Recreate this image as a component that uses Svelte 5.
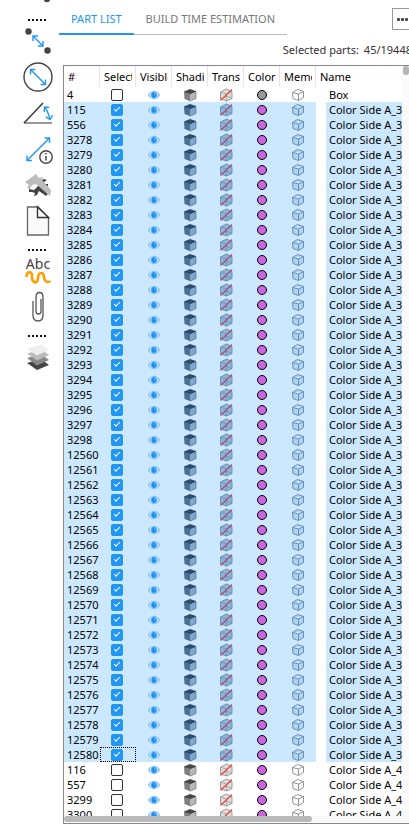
<script lang="ts">
	type Part = { id: number; name: string; selected: boolean; color: string };

	const range = (from: number, to: number) =>
		Array.from({ length: to - from + 1 }, (_, i) => from + i);

	const makePart = (id: number, name: string, selected: boolean): Part => ({
		id,
		name,
		selected,
		color: id === 4 ? 'grey' : 'violet'
	});

	let parts: Part[] = $state([
		makePart(4, 'Box', false),
		...[115, 556, ...range(3278, 3298), ...range(12560, 12580)].map((id) =>
			makePart(id, 'Color Side A_3', true)
		),
		...[116, 557, 3299, 3300].map((id) => makePart(id, 'Color Side A_4', false))
	]);

	let current = $state(12580);

	const columns = ['#', 'Selected', 'Visible', 'Shading', 'Transparent', 'Color', 'Memo', 'Name'];
</script>

<svg class="defs" aria-hidden="true">
	<defs>
		<marker id="arrow" viewBox="0 0 8 8" refX="6.5" refY="4" markerWidth="8" markerHeight="8" markerUnits="userSpaceOnUse" orient="auto-start-reverse">
			<path d="M3 0.5 L6.5 4 L3 7.5" fill="none" stroke="#2196f3" stroke-width="1.4" />
		</marker>
		<symbol id="eye" viewBox="0 0 14 12">
			<path d="M1 6 C3 0.5 11 0.5 13 6 C11 11.500 3 11.500 1 6Z" fill="#7cc0f8" />
			<path d="M2.5 6 C3 4 4 3.500 5 3 V9 C4 8.500 3 8 2.5 6Z M11.5 6 C11 4 10 3.500 9 3 V9 C10 8.500 11 8 11.5 6Z" fill="#c7e4fb" />
			<circle cx="7" cy="6" r="2.8" fill="#1e8fee" />
			<circle cx="8" cy="5" r="0.8" fill="#8cc8f8" />
		</symbol>
		<symbol id="shaded" viewBox="0 0 14 14">
			<path d="M1 3.500 L7 1 L13 3 V4 L7.500 6.500 L1 4.500Z" fill="var(--cube-top)" />
			<path d="M1 4 L7.500 6 V13 L1.500 10.500Z" fill="var(--cube-left)" />
			<path d="M7.500 6 L13 4 V10.500 L7.500 13Z" fill="var(--cube-right)" />
			<path d="M1.500 10.500 L7.500 13 L13 10.500 V4" fill="none" stroke="var(--cube-top)" stroke-width="0.5" />
		</symbol>
		<symbol id="transparent" viewBox="0 0 14 14">
			<path d="M1.5 4 L7.5 1 L13 3.5 V10.500 L7.5 13 L1.5 11Z" fill="var(--glass)" stroke="var(--line)" stroke-width="0.8" />
			<path d="M1.5 4 L7 6 L13 3.5 M7 6 L7.5 13 M7.5 8 L1.5 11 M7.5 8 L13 10.500" fill="none" stroke="var(--line)" stroke-width="0.6" />
			<path d="M1.5 12.5 L13 1.500" stroke="var(--slash)" stroke-width="1.1" />
		</symbol>
		<symbol id="outline" viewBox="0 0 14 14">
			<path d="M1.5 4.5 L6.5 1.5 L12.5 3.5 V9.5 L7.5 12.5 L2 10.5Z M1.5 4.5 L7.5 6 L12.5 3.5 M7.5 6 V12.5" fill="var(--clear)" stroke="var(--line)" stroke-linejoin="round" stroke-width="0.9" />
		</symbol>
	</defs>
</svg>

<div class="app">
	<nav class="tools" aria-label="Tools">
		<svg class="tool-end" viewBox="0 0 32 10"><circle cx="25" cy="-1" r="3.2" fill="#444" /></svg>
		<div class="dots"><i></i><i></i><i></i><i></i><i></i></div>
		<button aria-label="Point distance">
			<svg viewBox="0 0 32 36">
				<circle cx="6.5" cy="7.5" r="3.2" fill="#444" />
				<circle cx="25.5" cy="26.5" r="3.2" fill="#444" />
				<path class="measure" d="M11 12 L21 22" />
			</svg>
		</button>
		<button aria-label="Diameter">
			<svg viewBox="0 0 32 36">
				<circle cx="16" cy="17" r="14" fill="none" stroke="#444" stroke-width="1.4" />
				<path class="measure" d="M8.500 9.500 L23.5 24.5" />
			</svg>
		</button>
		<button aria-label="Angle">
			<svg viewBox="0 0 32 36">
				<path d="M2 27 H30" stroke="#999" stroke-width="2" />
				<path d="M2 27 L21 7" stroke="#444" stroke-width="1.7" />
				<path class="measure" d="M22.500 11 Q26 15 28 23.500" />
			</svg>
		</button>
		<button aria-label="Line information">
			<svg viewBox="0 0 32 36">
				<path class="measure" d="M5 28.5 L27.5 6" />
				<circle cx="24" cy="25" r="6.2" fill="#fff" stroke="#444" stroke-width="1.4" />
				<path d="M24 24 V28.5 M24 21 V22.6" stroke="#444" stroke-width="1.5" />
			</svg>
		</button>
		<button aria-label="Repair">
			<svg viewBox="0 0 32 36">
				<path d="M7 21 L12 22 L18 16 L18 13 L22 11 L25 12 L22 14 L23 16 L26 16 L26 18 L20 20 L26 26 L24 28 L17 23 L15 27 L12 28 L13 25 L10 24 L7 24Z" fill="#444" />
				<path d="M3 14 L14 6 L17 10 L21 9 L20 12 L29 22 L28 28 L14 16 L10 17 L8 21 L5 20 L7 17Z" fill="#bdbdbd" />
			</svg>
		</button>
		<button aria-label="Document">
			<svg viewBox="0 0 32 36">
				<path d="M5.5 3 H16 L26.5 13.500 V31 H5.5Z" fill="#fafafa" stroke="#666" stroke-width="1.3" />
				<path d="M15.5 3 V13.5 H26.5Z" fill="#fff" stroke="#333" stroke-width="1.4" />
			</svg>
		</button>
		<div class="dots"><i></i><i></i><i></i><i></i><i></i></div>
		<button aria-label="Text">
			<svg viewBox="0 0 32 36">
				<text x="16" y="15" text-anchor="middle">Abc</text>
				<path d="M4.500 22 C5 17 10.500 17 10 22 C9.500 29 15.500 31 16 24 C16.500 17 21.500 18 22 23 C22 27 25 29 27.500 27.500" fill="none" stroke="#ff9f00" stroke-width="2.6" stroke-linecap="round" />
			</svg>
		</button>
		<button aria-label="Attachment">
			<svg viewBox="0 0 32 36">
				<path d="M19 9 V21 Q19 24 16.500 24 Q14 24 14 21 V7 Q14 2.500 17.500 2.500 Q21 2.500 21 7 V25 Q21 31 16 31 Q11 31 11 25 V11" fill="none" stroke="#555" stroke-width="1.3" />
			</svg>
		</button>
		<div class="dots"><i></i><i></i><i></i><i></i><i></i></div>
		<button aria-label="Layers">
			<svg viewBox="0 0 32 36">
				<path d="M5 23 L19 19 L27 25 L15 30Z" fill="#444" />
				<path d="M5 18 L19 14 L27 20 L15 25.500Z" fill="#888" />
				<path d="M5 13.500 L19 9.500 L27 15 L15 20.500Z" fill="#bbb" />
				<path d="M5 9 L19 4.500 L27 10 L15 15.500Z" fill="#eee" />
			</svg>
		</button>
	</nav>

	<main>
		<header>
			<div class="tabs" role="tablist">
				<button class="active" role="tab" aria-selected="true">PART LIST</button>
				<button role="tab" aria-selected="false">BUILD TIME ESTIMATION</button>
			</div>
			<button class="more" aria-label="More">
				<i></i><i></i><i></i><i></i>
			</button>
		</header>

		<p class="summary"><span>Selected parts:</span><span>45/19448</span></p>

		<div class="list">
			<div class="viewport">
				<table>
					<colgroup>
						{#each columns as column}
							<col class:name={column === 'Name'} />
						{/each}
					</colgroup>
					<thead>
						<tr>
							{#each columns as column}
								<th><span>{column}</span></th>
							{/each}
						</tr>
					</thead>
					<tbody>
						{#each parts as part (part.id)}
							<tr class:selected={part.selected}>
								<td class="id">{part.id}</td>
								<td class="icon check" class:current={part.id === current}>
									<input
										type="checkbox"
										aria-label="Select {part.id}"
										bind:checked={part.selected}
										onchange={() => (current = part.id)}
									/>
								</td>
								<td class="icon"><svg class="eye"><use href="#eye" /></svg></td>
								<td class="icon"><svg><use href="#shaded" /></svg></td>
								<td class="icon"><svg><use href="#transparent" /></svg></td>
								<td class="icon"><span class="swatch {part.color}"></span></td>
								<td class="icon"><svg><use href="#outline" /></svg></td>
								<td class="part-name">{part.name}</td>
							</tr>
						{/each}
					</tbody>
				</table>
			</div>
			<div class="scroll-y"><div class="thumb"></div></div>
			<div class="scroll-x"><div class="thumb"></div></div>
		</div>
	</main>
</div>

<style>
	:global(body) {
		background: #fff;
		overflow: hidden;
	}

	.defs {
		position: absolute;
		width: 0;
		height: 0;
	}

	.app {
		display: flex;
		height: 100vh;
		overflow: hidden;
		color: #000;
		font-family: 'Noto Sans', sans-serif;
		font-size: 11px;
	}

	button {
		padding: 0;
		border: none;
		background: none;
		font: inherit;
		cursor: pointer;
	}

	.tools {
		display: flex;
		flex-direction: column;
		width: 32px;
		padding: 0 5px 0 22px;
		flex-shrink: 0;
	}

	.tools svg {
		display: block;
		width: 32px;
		height: 36px;
	}

	.tools .tool-end {
		height: 10px;
	}

	.tools text {
		font-size: 14px;
		fill: #444;
	}

	.measure {
		fill: none;
		stroke: #2196f3;
		stroke-width: 1.4;
		marker-start: url(#arrow);
		marker-end: url(#arrow);
	}

	.dots {
		display: flex;
		gap: 2px;
		margin: 9px 0 3px 6px;
	}

	.dots i {
		width: 2px;
		height: 2px;
		background: #111;
	}

	main {
		display: flex;
		flex-direction: column;
		flex: 1;
		min-width: 0;
	}

	header {
		display: flex;
		justify-content: space-between;
		align-items: flex-start;
		height: 35px;
	}

	.tabs {
		display: flex;
		height: 100%;
	}

	.tabs button {
		padding: 3px 12px 0;
		border-bottom: 1px solid #bbb;
		color: #777;
		white-space: nowrap;
	}

	.tabs .active {
		border-bottom: 2px solid #2196f3;
		color: #2196f3;
	}

	.more {
		display: flex;
		align-items: center;
		justify-content: center;
		gap: 1px;
		flex-shrink: 0;
		width: 24px;
		height: 22px;
		margin: 8px -7px 0 0;
		border: 1px solid #999;
	}

	.more i {
		width: 3px;
		height: 3px;
		border-radius: 1px;
		background: #444;
	}

	.summary {
		display: flex;
		justify-content: flex-end;
		gap: 5px;
		height: 30px;
		margin: 0 -3px 0 0;
		line-height: 30px;
		color: #333;
		white-space: nowrap;
	}

	.list {
		display: grid;
		grid-template: minmax(0, 1fr) 7px / minmax(0, 1fr) 7px;
		flex: 1;
		min-height: 0;
		margin: 0 0 2px 4px;
		border: 1px solid #828790;
		border-right: none;
	}

	.viewport {
		overflow: hidden;
	}

	table {
		width: 100%;
		table-layout: fixed;
		border-spacing: 0;
		line-height: 15px;
	}

	col {
		width: 36px;
	}

	col.name {
		width: auto;
	}

	th,
	td {
		padding: 0;
		overflow: hidden;
		white-space: nowrap;
		text-align: left;
		font-weight: normal;
	}

	th {
		height: 21px;
		padding: 0 3px 0 4px;
		border-right: 1px solid #e5e5e5;
	}

	th:last-child {
		border-right: none;
	}

	th span {
		display: block;
		overflow: hidden;
	}

	td {
		height: 15px;
	}

	tr {
		--cube-top: #484848;
		--cube-left: #808080;
		--cube-right: #b8b8b8;
		--glass: #ddd;
		--line: #888;
		--slash: #f44336;
		--clear: #fff;
	}

	.selected {
		--cube-top: #2c4d6e;
		--cube-left: #4a6f94;
		--cube-right: #7fa6cb;
		--glass: #8db4da;
		--line: #6084a8;
		--slash: #b04c6c;
		--clear: #b0d4f4;
	}

	.selected td {
		background: #cce8ff;
	}

	.id {
		padding-left: 3px;
	}

	.icon {
		text-align: center;
		line-height: 0;
	}

	.check {
		padding-right: 2px;
	}

	.icon svg {
		display: block;
		width: 14px;
		height: 14px;
		margin: 0 auto;
	}

	.icon .eye {
		height: 12px;
	}

	.current {
		outline: 1px dotted #000;
		outline-offset: -1px;
	}

	input {
		appearance: none;
		display: block;
		width: 12px;
		height: 12px;
		margin: 0 auto;
		border: 1px solid #333;
		border-radius: 2px;
		background: #fff;
	}

	input:checked {
		border-color: #2196f3;
		background: #2196f3;
	}

	input:checked::before {
		content: '';
		display: block;
		width: 5px;
		height: 2px;
		margin: 2px 0 0 2px;
		border-left: 1px solid #fff;
		border-bottom: 1px solid #fff;
		transform: rotate(-45deg);
	}

	.swatch {
		display: block;
		box-sizing: border-box;
		width: 10px;
		height: 10px;
		margin: 0 auto;
		border: 1px solid #000;
		border-radius: 5px;
	}

	.grey {
		background: #999;
	}

	.violet {
		background: #cc66dd;
	}

	.selected .part-name,
	.part-name {
		padding-left: 10px;
		background-clip: content-box;
		text-indent: 3px;
	}

	.scroll-y,
	.scroll-x {
		background: #fafafa;
	}

	.scroll-x {
		grid-column: 1 / -1;
	}

	.scroll-y .thumb {
		height: 9px;
		margin-left: 1px;
		border-radius: 3px;
		background: #b5b5b5;
	}

	.scroll-x .thumb {
		width: 72%;
		height: 6px;
		border-radius: 3px;
		background: #b9b9b9;
	}
</style>
